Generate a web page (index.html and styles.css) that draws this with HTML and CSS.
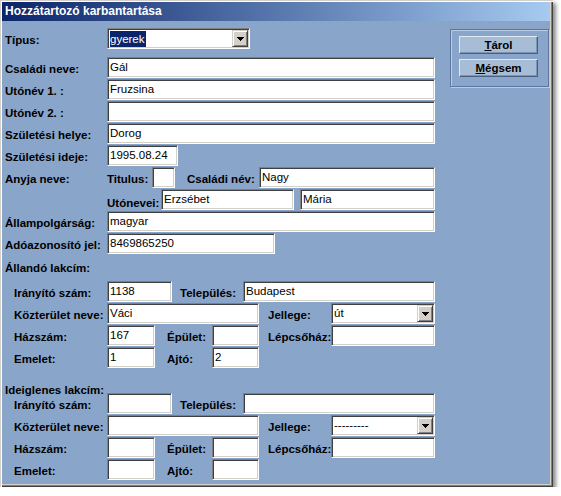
FILE: index.html
```html
<!DOCTYPE html>
<html lang="hu">
<head>
<meta charset="utf-8">
<title>Hozzátartozó karbantartása</title>
<link rel="stylesheet" href="styles.css">
</head>
<body>
<div class="window">
  <div class="titlebar">Hozzátartozó karbantartása</div>
  <div class="client">
    <div class="form">
      <div class="row first">
        <div class="lbl">Típus:</div>
        <div class="f combo w143"><span class="cval"><span class="sel">gyerek</span></span><span class="cbtn"><svg width="7" height="4" viewBox="0 0 7 4"><path d="M0 0H7L3.5 4Z"/></svg></span></div>
      </div>
      <div class="row"><div class="lbl">Családi neve:</div><div class="f w328">Gál</div></div>
      <div class="row"><div class="lbl">Utónév 1. :</div><div class="f w328">Fruzsina</div></div>
      <div class="row"><div class="lbl">Utónév 2. :</div><div class="f w328"></div></div>
      <div class="row"><div class="lbl">Születési helye:</div><div class="f w328">Dorog</div></div>
      <div class="row"><div class="lbl">Születési ideje:</div><div class="f w71">1995.08.24</div></div>
      <div class="row">
        <div class="lbl">Anyja neve:</div>
        <div class="lbl il-tit">Titulus:</div>
        <div class="f w23"></div>
        <div class="lbl il-csn">Családi név:</div>
        <div class="f w176">Nagy</div>
      </div>
      <div class="row">
        <div class="lbl"></div>
        <div class="lbl il-uto">Utónevei:</div>
        <div class="f w133">Erzsébet</div>
        <div class="f w135 gap6">Mária</div>
      </div>
      <div class="row"><div class="lbl">Állampolgárság:</div><div class="f w328">magyar</div></div>
      <div class="row"><div class="lbl">Adóazonosító jel:</div><div class="f w168">8469865250</div></div>

      <div class="section s1">Állandó lakcím:</div>
      <div class="row">
        <div class="lbl ind">Irányító szám:</div>
        <div class="f w65">1138</div>
        <div class="lbl il-tel">Település:</div>
        <div class="f w192">Budapest</div>
      </div>
      <div class="row">
        <div class="lbl ind">Közterület neve:</div>
        <div class="f w152">Váci</div>
        <div class="lbl il-jel">Jellege:</div>
        <div class="f combo w104"><span class="cval">út</span><span class="cbtn"><svg width="7" height="4" viewBox="0 0 7 4"><path d="M0 0H7L3.5 4Z"/></svg></span></div>
      </div>
      <div class="row">
        <div class="lbl ind">Házszám:</div>
        <div class="f w48">167</div>
        <div class="lbl il-epu">Épület:</div>
        <div class="f w47"></div>
        <div class="lbl il-jel">Lépcsőház:</div>
        <div class="f w104"></div>
      </div>
      <div class="row">
        <div class="lbl ind">Emelet:</div>
        <div class="f w48">1</div>
        <div class="lbl il-epu">Ajtó:</div>
        <div class="f w47">2</div>
      </div>

      <div class="section s2">Ideiglenes lakcím:</div>
      <div class="row">
        <div class="lbl ind">Irányító szám:</div>
        <div class="f w65"></div>
        <div class="lbl il-tel">Település:</div>
        <div class="f w192"></div>
      </div>
      <div class="row">
        <div class="lbl ind">Közterület neve:</div>
        <div class="f w152"></div>
        <div class="lbl il-jel">Jellege:</div>
        <div class="f combo w104"><span class="cval">---------</span><span class="cbtn"><svg width="7" height="4" viewBox="0 0 7 4"><path d="M0 0H7L3.5 4Z"/></svg></span></div>
      </div>
      <div class="row">
        <div class="lbl ind">Házszám:</div>
        <div class="f w48"></div>
        <div class="lbl il-epu">Épület:</div>
        <div class="f w47"></div>
        <div class="lbl il-jel">Lépcsőház:</div>
        <div class="f w104"></div>
      </div>
      <div class="row">
        <div class="lbl ind">Emelet:</div>
        <div class="f w48"></div>
        <div class="lbl il-epu">Ajtó:</div>
        <div class="f w47"></div>
      </div>
    </div>
    <div class="side">
      <div class="group">
        <button class="btn" type="button"><u>T</u>árol</button>
        <button class="btn" type="button"><u>M</u>égsem</button>
      </div>
    </div>
  </div>
</div>
</body>
</html>
```

FILE: styles.css
```css
* { box-sizing: border-box; }

body {
  margin: 0;
  background: #fff;
  font-family: "Liberation Sans", Arial, sans-serif;
  color: #000;
}

.window {
  width: 553px;
  height: 487px;
  padding: 2px 3px 3px 2px;
  background: #d4d0c8;
  display: flex;
  flex-direction: column;
  box-shadow:
    inset 1px 1px 0 #d4d0c8,
    inset 2px 2px 0 #fff,
    inset -1px -1px 0 #404040,
    inset -2px -2px 0 #808080,
    3px 3px 4px rgba(0, 0, 0, 0.45);
}

.titlebar {
  height: 19px;
  flex: none;
  background: linear-gradient(to right, #0a246a, #a6caf0);
  color: #fff;
  font-weight: bold;
  font-size: 12px;
  line-height: 19px;
  padding-left: 3px;
  white-space: nowrap;
}

.client {
  flex: 1;
  background: #89a5c9;
  display: flex;
}

.form {
  width: 448px;
  flex: none;
  padding: 7px 0 0 3px;
}

.row {
  display: flex;
  align-items: flex-start;
  height: 22px;
}

.row.first { height: 29px; }

.lbl {
  width: 102px;
  flex: none;
  font-weight: bold;
  font-size: 11.5px;
  line-height: 14px;
  padding-top: 5px;
  white-space: nowrap;
}

.ind { padding-left: 9px; }

.il-tit { width: 45px; }
.il-csn { width: 84px; padding-left: 12px; }
.il-uto { width: 54px; padding-top: 7px; }
.il-tel { width: 71px; padding-left: 8px; }
.il-jel { width: 72px; padding-left: 9px; }
.il-epu { width: 57px; padding-left: 12px; }

.section {
  font-weight: bold;
  font-size: 11.5px;
  line-height: 14px;
  white-space: nowrap;
}

.s1 { height: 26px; padding-top: 6px; }
.s2 { height: 24px; padding-top: 14px; }

.f {
  flex: none;
  height: 21px;
  background: #fff;
  border: 1px solid;
  border-color: #808080 #fff #fff #808080;
  box-shadow: inset 1px 1px 0 #404040, inset -1px -1px 0 #d4d0c8;
  font-size: 11.5px;
  line-height: 19px;
  padding-left: 2px;
  white-space: nowrap;
  overflow: hidden;
}

.gap6 { margin-left: 6px; }

.w23 { width: 23px; }
.w47 { width: 47px; }
.w48 { width: 48px; }
.w65 { width: 65px; }
.w71 { width: 71px; }
.w104 { width: 104px; }
.w133 { width: 133px; }
.w135 { width: 135px; }
.w143 { width: 143px; }
.w152 { width: 152px; }
.w168 { width: 168px; }
.w176 { width: 176px; }
.w192 { width: 192px; }
.w328 { width: 328px; }

.combo {
  display: flex;
  padding: 1px;
}

.cval {
  flex: 1;
  line-height: 17px;
  padding-left: 1px;
  overflow: hidden;
}

.sel {
  display: inline-block;
  background: #0a246a;
  color: #fff;
  line-height: 16px;
  padding-right: 1px;
  margin-top: 1px;
  vertical-align: top;
}

.cbtn {
  flex: none;
  width: 16px;
  height: 17px;
  background: #d4d0c8;
  border: 1px solid;
  border-color: #d4d0c8 #404040 #404040 #d4d0c8;
  box-shadow: inset 1px 1px 0 #fff, inset -1px -1px 0 #808080;
  display: flex;
  align-items: center;
  justify-content: center;
}

.cbtn svg {
  display: block;
  fill: #000;
  shape-rendering: crispEdges;
}

.side {
  flex: 1;
}

.group {
  margin-top: 8px;
  width: 99px;
  height: 58px;
  border: 1px solid #5c78a0;
  box-shadow: inset 1px 1px 0 #b8cbe2, 1px 1px 0 #b8cbe2;
  padding: 6px 0 0 8px;
  display: flex;
  flex-direction: column;
  gap: 5px;
}

.btn {
  width: 79px;
  height: 18px;
  margin: 0;
  padding: 0;
  background: #a7bdd5;
  border: 1px solid;
  border-color: #dfe9f4 #4a6080 #4a6080 #dfe9f4;
  box-shadow: inset -1px -1px 0 #7d93b1;
  font-family: "Liberation Sans", Arial, sans-serif;
  font-weight: bold;
  font-size: 11.5px;
  line-height: 16px;
  text-align: center;
  color: #000;
}
```
